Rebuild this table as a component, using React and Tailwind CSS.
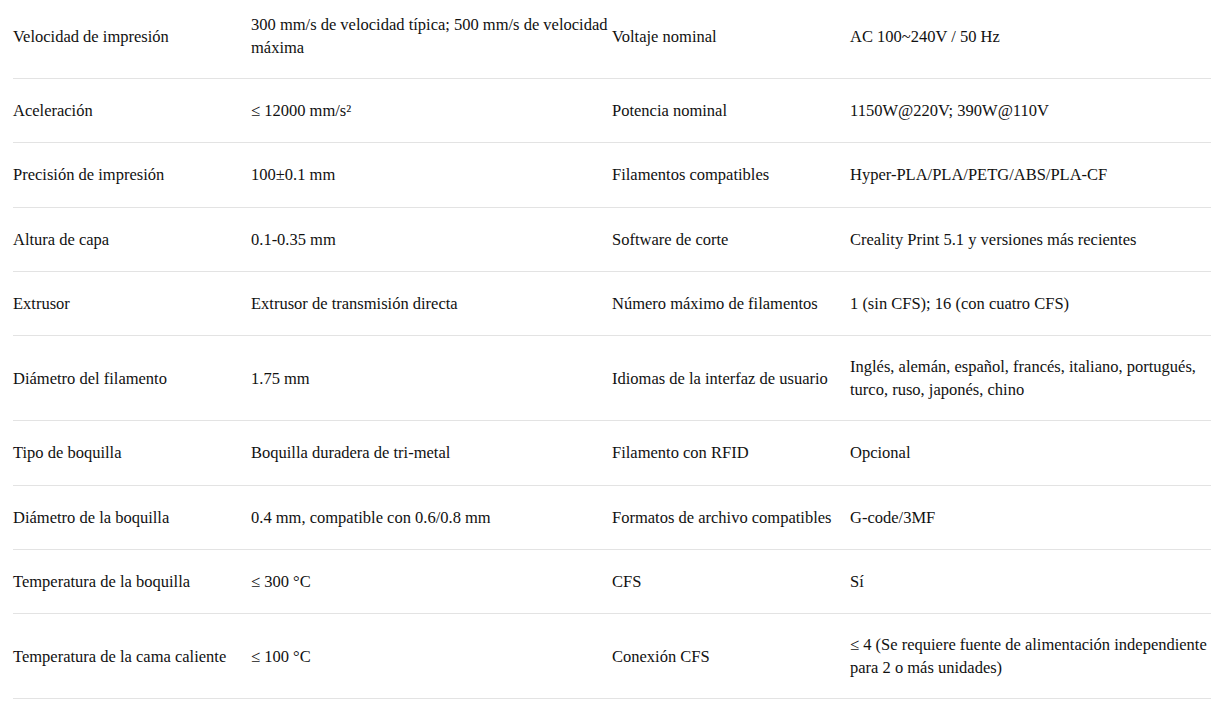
import React from "react";

const specs = [
  ["Velocidad de impresión", "300 mm/s de velocidad típica; 500 mm/s de velocidad máxima", "Voltaje nominal", "AC 100~240V / 50 Hz"],
  ["Aceleración", "≤ 12000 mm/s²", "Potencia nominal", "1150W@220V; 390W@110V"],
  ["Precisión de impresión", "100±0.1 mm", "Filamentos compatibles", "Hyper-PLA/PLA/PETG/ABS/PLA-CF"],
  ["Altura de capa", "0.1-0.35 mm", "Software de corte", "Creality Print 5.1 y versiones más recientes"],
  ["Extrusor", "Extrusor de transmisión directa", "Número máximo de filamentos", "1 (sin CFS); 16 (con cuatro CFS)"],
  ["Diámetro del filamento", "1.75 mm", "Idiomas de la interfaz de usuario", "Inglés, alemán, español, francés, italiano, portugués, turco, ruso, japonés, chino"],
  ["Tipo de boquilla", "Boquilla duradera de tri-metal", "Filamento con RFID", "Opcional"],
  ["Diámetro de la boquilla", "0.4 mm, compatible con 0.6/0.8 mm", "Formatos de archivo compatibles", "G-code/3MF"],
  ["Temperatura de la boquilla", "≤ 300 °C", "CFS", "Sí"],
  ["Temperatura de la cama caliente", "≤ 100 °C", "Conexión CFS", "≤ 4 (Se requiere fuente de alimentación independiente para 2 o más unidades)"],
];

export default function App() {
  return (
    <div className="min-h-screen bg-white overflow-hidden">
      <div
        className="ml-[13px] -mt-[6px] w-[1198px] text-[16.5px] leading-[23px] text-[#111]"
        style={{ fontFamily: '"Liberation Serif", "Times New Roman", serif' }}
      >
        {specs.map((row, i) => (
          <div
            key={i}
            className="grid grid-cols-[238px_361px_238px_361px] border-b border-[#e3e3e3]"
          >
            {row.map((cell, j) => (
              <div key={j} className="flex items-center min-h-[63.33px] py-[19px]">
                <span>{cell}</span>
              </div>
            ))}
          </div>
        ))}
      </div>
    </div>
  );
}
